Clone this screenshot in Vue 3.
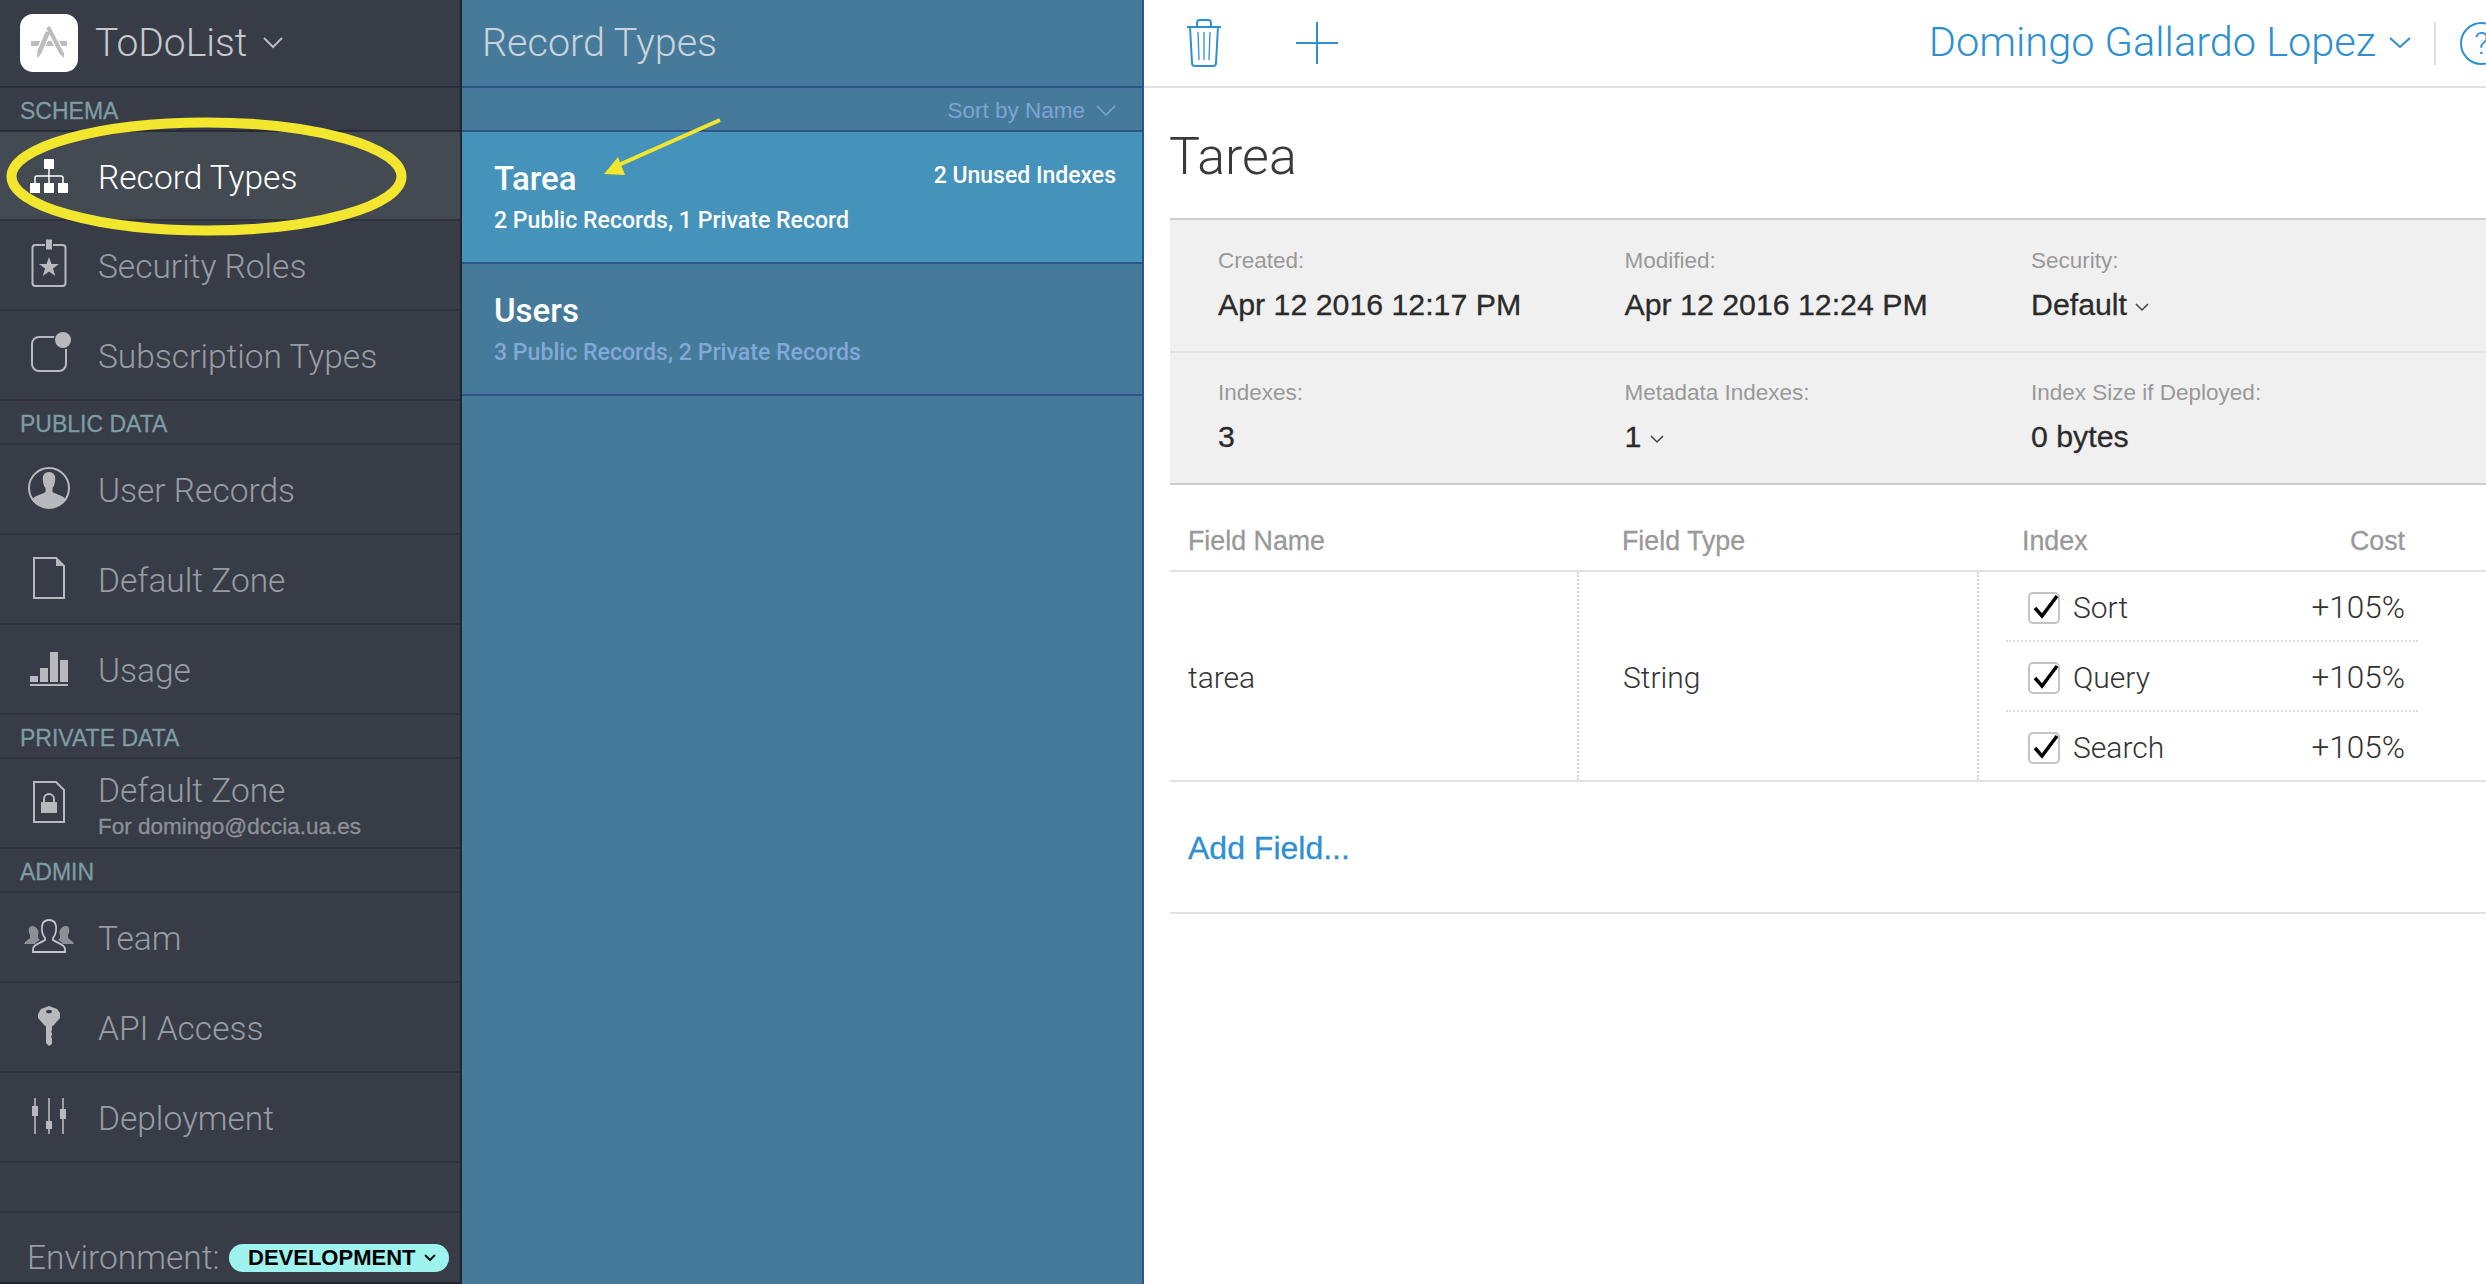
<template>
  <div class="page">
    <!-- Left navigation -->
    <aside class="sidebar">
      <div class="app-head">
        <div class="app-logo">
          <svg width="44" height="44" viewBox="0 0 44 44" fill="none">
            <rect x="4" y="20" width="36" height="5" fill="#bcbcbc" />
            <path d="M21 11 L11 34 M21 6 L36 35" stroke="#fff" stroke-width="7" />
            <path d="M21 11 L12 32" stroke="#bcbcbc" stroke-width="4.500" />
            <path d="M21 6 L35 33" stroke="#bcbcbc" stroke-width="4" />
            <polygon points="10,31 14,33 10.500,37" fill="#bcbcbc" />
            <polygon points="33,33 37,31 37,37" fill="#bcbcbc" />
          </svg>
        </div>
        <span class="app-name">ToDoList</span>
        <svg class="app-chev" width="22" height="14" viewBox="0 0 22 14">
          <polyline points="2,2 11,11 20,2" fill="none" stroke="#b8bbbf" stroke-width="2" />
        </svg>
      </div>

      <template v-for="(group, g) in navGroups" :key="group.title">
        <div class="nav-title" :class="{ 'nav-title--dark': g === 0 }">{{ group.title }}</div>
        <div
          v-for="item in group.items"
          :key="item.label + group.title"
          class="nav-item"
          :class="{ 'nav-item--active': item.active }"
        >
          <div class="nav-icon">
            <svg width="60" height="60" viewBox="0 0 60 60" fill="none" :stroke="item.active ? '#fff' : '#b7b9bf'" stroke-width="2">
              <template v-if="item.icon === 'org'">
                <g fill="#fff" stroke="none">
                  <rect x="25" y="13" width="10" height="10" />
                  <rect x="11" y="37" width="10" height="10" />
                  <rect x="25" y="37" width="10" height="10" />
                  <rect x="39" y="37" width="10" height="10" />
                </g>
                <path d="M30 23 V37 M16 37 V32 Q16 30 18 30 H42 Q44 30 44 32 V37" stroke-width="1.500" />
              </template>
              <template v-else-if="item.icon === 'badge'">
                <rect x="13.500" y="10" width="33" height="41" rx="3" />
                <rect x="26.500" y="4" width="7" height="11" fill="#b7b9bf" stroke="#383c47" stroke-width="1" />
                <polygon points="30,22 32.500,29 40,29 34,33.500 36.200,41 30,36.500 23.800,41 26,33.500 20,29 27.500,29" fill="#b7b9bf" stroke="none" />
              </template>
              <template v-else-if="item.icon === 'sub'">
                <rect x="13" y="12" width="34" height="34" rx="7" />
                <circle cx="44" cy="15" r="9.500" fill="#383c47" stroke="none" />
                <circle cx="44" cy="15" r="8" fill="#b7b9bf" stroke="none" />
              </template>
              <template v-else-if="item.icon === 'user'">
                <circle cx="30" cy="29" r="20" />
                <path d="M30 13 C25 13 23 17 24 22 C24.500 26 25 27 26.500 29 V33 C22 36 16 36 13 41 C17 46 23 48.500 30 48.500 C37 48.500 43 46 47 41 C44 36 38 36 33.500 33 V29 C35 27 35.500 26 36 22 C37 17 35 13 30 13 Z" fill="#b7b9bf" stroke="none" />
              </template>
              <template v-else-if="item.icon === 'doc' || item.icon === 'lock'">
                <path d="M15 9 H37 L45 17 V49 H15 Z" />
                <polygon points="37,9 45,17 37,17" fill="#b7b9bf" stroke="none" v-if="item.icon === 'doc'" />
                <template v-if="item.icon === 'lock'">
                  <rect x="22" y="29" width="16" height="11" fill="#b7b9bf" stroke="none" />
                  <path d="M25 29 V26 A5 5 0 0 1 35 26 V29" />
                </template>
              </template>
              <template v-else-if="item.icon === 'usage'">
                <g fill="#b7b9bf" stroke="none">
                  <rect x="11" y="37" width="8" height="6" />
                  <rect x="21" y="29" width="8" height="14" />
                  <rect x="31" y="13" width="8" height="30" />
                  <rect x="41" y="21" width="8" height="22" />
                  <rect x="11" y="45" width="38" height="2" />
                </g>
              </template>
              <template v-else-if="item.icon === 'team'">
                <g fill="#8d9096" stroke="none">
                  <path d="M13 19 C9 19 9 25 11 28 V31 C9 33 6 34 5 37 H16 C17 35 19 34 21 33 L19 31 V28 C21 25 18 19 13 19 Z" />
                  <path d="M47 19 C51 19 51 25 49 28 V31 C51 33 54 34 55 37 H44 C43 35 41 34 39 33 L41 31 V28 C39 25 42 19 47 19 Z" />
                </g>
                <path d="M30 13 C24 13 22 18 23 24 C23.500 28 25 30 26 31 V33 C22 36 14 37 14 42 V45 H46 V42 C46 37 38 36 34 33 V31 C35 30 36.500 28 37 24 C38 18 36 13 30 13 Z" fill="#383c47" stroke="#c3c5ca" stroke-width="1.800" />
              </template>
              <template v-else-if="item.icon === 'key'">
                <path d="M30 9 L38 12 L41 16 V21 L34 29 H33 V33 L32 35 L33 36 V38 L32 40 L33 41 V47 L30 49 L27 46 V29 H26 L19 21 V17 L22 12 Z" fill="#b7b9bf" stroke="none" />
                <ellipse cx="30" cy="14.500" rx="3" ry="1.800" fill="#383c47" stroke="none" />
              </template>
              <template v-else-if="item.icon === 'sliders'">
                <path d="M16 11 V47 M30 11 V47 M44 11 V47" stroke-width="1.600" />
                <g fill="#b7b9bf" stroke="none">
                  <rect x="13" y="19" width="6" height="10" />
                  <rect x="27" y="34" width="6" height="8" />
                  <rect x="41" y="22" width="6" height="10" />
                </g>
              </template>
            </svg>
          </div>
          <div class="nav-text">
            <span class="nav-label">{{ item.label }}</span>
            <span v-if="item.sub" class="nav-sub">{{ item.sub }}</span>
          </div>
        </div>
      </template>

      <div class="env">
        <span class="env-label">Environment:</span>
        <span class="env-pill">
          DEVELOPMENT
          <svg width="12" height="8" viewBox="0 0 12 8">
            <polyline points="1,1 6,6 11,1" fill="none" stroke="#111" stroke-width="2" />
          </svg>
        </span>
      </div>
    </aside>

    <!-- Record type list -->
    <section class="types">
      <div class="types-head">Record Types</div>
      <div class="types-sort">
        Sort by Name
        <svg width="20" height="12" viewBox="0 0 20 12">
          <polyline points="1,1 10,10 19,1" fill="none" stroke="#7ba5d4" stroke-width="1.500" />
        </svg>
      </div>
      <div
        v-for="type in recordTypes"
        :key="type.name"
        class="type-row"
        :class="{ 'type-row--selected': type.selected }"
      >
        <div class="type-top">
          <span class="type-name">{{ type.name }}</span>
          <span v-if="type.note" class="type-note">{{ type.note }}</span>
        </div>
        <div class="type-sub">{{ type.summary }}</div>
      </div>
    </section>

    <!-- Detail -->
    <main class="detail">
      <header class="toolbar">
        <svg class="tool-trash" width="36" height="48" viewBox="0 0 36 48" fill="none" stroke="#2e8fd1" stroke-width="2">
          <path d="M1 8 H35 M11 8 V4 Q11 1 14 1 H22 Q25 1 25 4 V8" />
          <path d="M4 8 L6 44 Q6 47 9 47 H27 Q30 47 30 44 L32 8" />
          <path d="M12 13 L13 41 M18 13 V41 M24 13 L23 41" stroke-width="1.300" />
        </svg>
        <svg class="tool-plus" width="42" height="42" viewBox="0 0 42 42">
          <path d="M21 0 V42 M0 21 H42" stroke="#2e8fd1" stroke-width="2" />
        </svg>
        <div class="user">
          <span class="user-name">Domingo Gallardo Lopez</span>
          <svg width="22" height="12" viewBox="0 0 22 12">
            <polyline points="1,1 11,10 21,1" fill="none" stroke="#2e8fd1" stroke-width="2" />
          </svg>
        </div>
        <span class="tool-sep"></span>
        <span class="help">?</span>
      </header>

      <h1 class="detail-title">Tarea</h1>

      <div class="info">
        <div class="info-row" v-for="(row, r) in infoRows" :key="r">
          <div class="info-cell" v-for="cell in row" :key="cell.label">
            <div class="info-label">{{ cell.label }}</div>
            <div class="info-value">
              {{ cell.value }}
              <svg v-if="cell.menu" width="14" height="9" viewBox="0 0 14 9">
                <polyline points="1,1 7,7 13,1" fill="none" stroke="#444" stroke-width="1.500" />
              </svg>
            </div>
          </div>
        </div>
      </div>

      <div class="fields-head">
        <span class="col-name">Field Name</span>
        <span class="col-type">Field Type</span>
        <span class="col-index">Index</span>
        <span class="col-cost">Cost</span>
      </div>

      <div class="field-row">
        <div class="field-name">tarea</div>
        <div class="field-type">String</div>
        <div class="field-indexes">
          <div v-for="idx in indexes" :key="idx" class="index-row">
            <span class="check">
              <svg width="30" height="30" viewBox="0 0 30 30">
                <polyline points="5,16 12,24 27,4" fill="none" stroke="#000" stroke-width="3.500" />
              </svg>
            </span>
            <span class="index-name">{{ idx }}</span>
            <span class="index-cost">+105%</span>
          </div>
        </div>
      </div>

      <div class="add-row"><a class="add-field">Add Field...</a></div>
    </main>

    <!-- Yellow marks drawn over the screenshot -->
    <svg class="marks" width="1160" height="300" viewBox="0 0 1160 300">
      <ellipse cx="206.500" cy="176.500" rx="195" ry="54" fill="none" stroke="#f3e62f" stroke-width="10" />
      <path d="M720 120 L614 167" stroke="#f3e62f" stroke-width="4" />
      <polygon points="604,174 618,157 625,175" fill="#f3e62f" />
    </svg>
  </div>
</template>

<script setup>
const navGroups = [
  {
    title: 'SCHEMA',
    items: [
      { label: 'Record Types', icon: 'org', active: true },
      { label: 'Security Roles', icon: 'badge' },
      { label: 'Subscription Types', icon: 'sub' },
    ],
  },
  {
    title: 'PUBLIC DATA',
    items: [
      { label: 'User Records', icon: 'user' },
      { label: 'Default Zone', icon: 'doc' },
      { label: 'Usage', icon: 'usage' },
    ],
  },
  {
    title: 'PRIVATE DATA',
    items: [{ label: 'Default Zone', icon: 'lock', sub: 'For domingo@dccia.ua.es' }],
  },
  {
    title: 'ADMIN',
    items: [
      { label: 'Team', icon: 'team' },
      { label: 'API Access', icon: 'key' },
      { label: 'Deployment', icon: 'sliders' },
    ],
  },
]

const recordTypes = [
  {
    name: 'Tarea',
    note: '2 Unused Indexes',
    summary: '2 Public Records, 1 Private Record',
    selected: true,
  },
  { name: 'Users', summary: '3 Public Records, 2 Private Records' },
]

const infoRows = [
  [
    { label: 'Created:', value: 'Apr 12 2016 12:17 PM' },
    { label: 'Modified:', value: 'Apr 12 2016 12:24 PM' },
    { label: 'Security:', value: 'Default', menu: true },
  ],
  [
    { label: 'Indexes:', value: '3' },
    { label: 'Metadata Indexes:', value: '1', menu: true },
    { label: 'Index Size if Deployed:', value: '0 bytes' },
  ],
]

const indexes = ['Sort', 'Query', 'Search']
</script>

<style>
html,
body {
  margin: 0;
  background: #fff;
  overflow: hidden;
}
</style>

<style scoped>
.page {
  position: relative;
  display: flex;
  width: 2486px;
  height: 1284px;
  overflow: hidden;
  font-family: "Liberation Sans", Arial, sans-serif;
}

/* Sidebar */
.sidebar {
  box-sizing: border-box;
  width: 462px;
  height: 1284px;
  flex: none;
  background: #383c47;
  border-right: 2px solid #21262f;
  border-bottom: 2px solid #21262f;
}

.app-head {
  box-sizing: border-box;
  height: 88px;
  display: flex;
  align-items: center;
  padding-left: 20px;
  border-bottom: 2px solid #262b36;
}

.app-logo {
  width: 58px;
  height: 58px;
  border-radius: 13px;
  background: #fff;
  display: flex;
  align-items: center;
  justify-content: center;
}

.app-name {
  margin-left: 17px;
  font-family: Roboto, sans-serif;
  font-weight: 300;
  font-size: 39px;
  color: #c6c9cc;
}

.app-chev {
  margin-left: 15px;
}

.nav-title {
  box-sizing: border-box;
  height: 44px;
  padding: 12px 0 0 20px;
  font-size: 23px;
  line-height: 22px;
  color: #7d9ca3;
  -webkit-text-stroke: 0.3px #7d9ca3;
  border-bottom: 2px solid #2f333d;
}

.nav-title--dark {
  border-bottom-color: #262b36;
}

.nav-item {
  box-sizing: border-box;
  height: 90px;
  display: flex;
  border-bottom: 2px solid #2f333d;
}

.nav-item--active {
  height: 89px;
  background: #444a52;
}

.nav-icon {
  width: 98px;
  flex: none;
  display: flex;
  align-items: center;
  justify-content: center;
}

.nav-text {
  flex: 1;
  display: flex;
  flex-direction: column;
  justify-content: center;
  padding-top: 3px;
}

.nav-label {
  font-family: Roboto, sans-serif;
  font-weight: 300;
  font-size: 33.500px;
  color: #979ca4;
}

.nav-item--active .nav-label {
  color: #fff;
}

.nav-sub {
  margin-top: 5px;
  font-size: 22.500px;
  line-height: 24px;
  color: #8c9198;
  -webkit-text-stroke: 0.3px #8c9198;
}

.env {
  margin-top: 48px;
  box-sizing: border-box;
  height: 70px;
  border-top: 2px solid #2f333d;
  display: flex;
  align-items: center;
  padding: 21px 0 0 27px;
}

.env-label {
  width: 202px;
  font-family: Roboto, sans-serif;
  font-weight: 300;
  font-size: 33.500px;
  color: #979ca4;
}

.env-pill {
  box-sizing: border-box;
  width: 220px;
  height: 28px;
  border-radius: 14px;
  background: #9ef3ef;
  color: #000;
  font-weight: bold;
  font-size: 22px;
  display: flex;
  align-items: center;
  padding-left: 19px;
  gap: 9px;
}

/* Record types list */
.types {
  box-sizing: border-box;
  width: 682px;
  height: 1284px;
  flex: none;
  background: #467a9a;
  border-right: 2px solid #2f5488;
}

.types-head {
  box-sizing: border-box;
  height: 88px;
  padding: 20px 0 0 20px;
  font-family: Roboto, sans-serif;
  font-weight: 300;
  font-size: 39.500px;
  line-height: 46px;
  color: #c9d3d9;
  border-bottom: 2px solid #2f5488;
}

.types-sort {
  box-sizing: border-box;
  height: 44px;
  display: flex;
  align-items: center;
  justify-content: flex-end;
  gap: 11px;
  padding: 3px 26px 0 0;
  font-size: 22.500px;
  color: #7ba5d4;
  border-bottom: 2px solid #2f5488;
}

.type-row {
  box-sizing: border-box;
  height: 132px;
  padding: 27px 26px 0 32px;
  border-bottom: 2px solid #2f5488;
}

.type-row--selected {
  background: #4592ba;
}

.type-top {
  display: flex;
  justify-content: space-between;
  height: 42px;
}

.type-name {
  font-family: Roboto, sans-serif;
  font-weight: 500;
  font-size: 33px;
  line-height: 40px;
  color: #fff;
}

.type-note {
  font-family: Roboto, sans-serif;
  font-weight: 500;
  font-size: 23px;
  line-height: 33px;
  color: #fff;
}

.type-sub {
  margin-top: 5px;
  font-family: Roboto, sans-serif;
  font-weight: 500;
  font-size: 23.100px;
  line-height: 30px;
  color: #7fa9d6;
}

.type-row--selected .type-sub {
  color: #fff;
}

/* Detail pane */
.detail {
  flex: 1;
  min-width: 0;
  background: #fff;
}

.toolbar {
  box-sizing: border-box;
  height: 88px;
  display: flex;
  align-items: center;
  border-bottom: 2px solid #e2e2e2;
}

.tool-trash {
  margin-left: 42px;
}

.tool-plus {
  margin-left: 74px;
}

.user {
  margin-left: auto;
  display: flex;
  align-items: center;
  gap: 13px;
}

.user-name {
  padding-bottom: 3px;
  font-family: Roboto, sans-serif;
  font-weight: 300;
  font-size: 41.500px;
  color: #2e8fd1;
}

.tool-sep {
  flex: none;
  width: 2px;
  height: 43px;
  margin-left: 23px;
  background: #ddd;
}

.help {
  flex: none;
  box-sizing: border-box;
  width: 43px;
  height: 43px;
  margin: 0 -17px 0 24px;
  border: 2px solid #2e8fd1;
  border-radius: 50%;
  font-family: Roboto, sans-serif;
  font-weight: 300;
  font-size: 32px;
  line-height: 39px;
  text-align: center;
  color: #2e8fd1;
}

.detail-title {
  box-sizing: border-box;
  height: 130px;
  margin: 0;
  padding: 39px 0 0 25px;
  font-family: Roboto, sans-serif;
  font-weight: 300;
  font-size: 52px;
  line-height: 60px;
  color: #3a3a3a;
}

.info {
  margin-left: 26px;
  background: #f0f0f0;
  border-top: 2px solid #ccc;
  border-bottom: 2px solid #ccc;
}

.info-row {
  box-sizing: border-box;
  height: 131px;
  display: grid;
  grid-template-columns: 406.500px 406.500px 1fr;
  padding: 28px 0 0 48px;
}

.info-row + .info-row {
  height: 132px;
  padding-top: 27px;
  border-top: 2px solid #e2e2e2;
}

.info-label {
  font-size: 22.500px;
  line-height: 26px;
  color: #999;
}

.info-value {
  margin-top: 13px;
  font-size: 30.300px;
  line-height: 36px;
  color: #2b2b2b;
  -webkit-text-stroke: 0.3px #2b2b2b;
}

.info-value svg {
  vertical-align: 3px;
}

.fields-head {
  box-sizing: border-box;
  height: 87px;
  margin-left: 26px;
  display: flex;
  align-items: center;
  padding-top: 28px;
  color: #999;
  font-size: 26.800px;
  -webkit-text-stroke: 0.3px #999;
  border-bottom: 2px solid #e2e2e2;
}

.col-name {
  margin-left: 18px;
  width: 434px;
}

.col-type {
  width: 400px;
}

.col-index {
  width: 200px;
}

.col-cost {
  width: 183px;
  text-align: right;
}

.field-row {
  box-sizing: border-box;
  height: 210px;
  margin-left: 26px;
  display: flex;
  border-bottom: 2px solid #e2e2e2;
  font-family: Roboto, sans-serif;
  font-weight: 300;
  font-size: 30px;
  color: #333;
}

.field-name,
.field-type {
  display: flex;
  align-items: center;
  padding-top: 2px;
  padding-left: 18px;
}

.field-name {
  box-sizing: border-box;
  width: 409px;
  border-right: 2px dotted #d5d5d5;
}

.field-type {
  box-sizing: border-box;
  width: 400px;
  padding-left: 44px;
  border-right: 2px dotted #d5d5d5;
}

.field-indexes {
  padding: 0 0 0 27px;
  width: 412px;
}

.index-row {
  box-sizing: border-box;
  height: 70px;
  display: flex;
  align-items: center;
  padding-top: 3px;
  border-bottom: 2px dotted #ddd;
}

.index-row:last-child {
  height: 68px;
  border-bottom: none;
}

.check {
  box-sizing: border-box;
  position: relative;
  width: 32px;
  height: 32px;
  margin-left: 22px;
  border: 2px solid #c4c4c4;
  border-radius: 5px;
  flex: none;
}

.check svg {
  position: absolute;
  left: 0;
  top: -2px;
}

.index-name {
  margin-left: 13px;
}

.index-cost {
  margin-left: auto;
  margin-right: 13px;
  font-size: 31.500px;
}

.add-row {
  box-sizing: border-box;
  height: 132px;
  margin-left: 26px;
  padding: 48px 0 0 18px;
  border-bottom: 2px solid #e2e2e2;
}

.add-field {
  font-size: 32px;
  line-height: 36px;
  color: #2e8fd1;
  -webkit-text-stroke: 0.3px #2e8fd1;
}

.marks {
  position: absolute;
  left: 0;
  top: 0;
  pointer-events: none;
}
</style>
